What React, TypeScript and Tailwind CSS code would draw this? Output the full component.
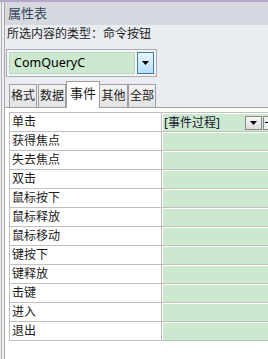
const events = [
  '单击',
  '获得焦点',
  '失去焦点',
  '双击',
  '鼠标按下',
  '鼠标释放',
  '鼠标移动',
  '键按下',
  '键释放',
  '击键',
  '进入',
  '退出',
]

function ArrowDown({ className }: { className?: string }) {
  return (
    <svg width="7" height="4" viewBox="0 0 7 4" className={className}>
      <path d="M0 0h7L3.5 4z" fill="#000" />
    </svg>
  )
}

export default function App() {
  return (
    <div className="flex h-[359px] w-[268px] flex-col overflow-hidden bg-[#e9ecf0] font-['Noto_Sans','Noto_Sans_CJK_SC',sans-serif] text-[12px] text-[#1e1e1e]">
      <div className="h-[2px] shrink-0 bg-[#b5a6cb]" />
      <div className="flex min-h-0 flex-1">
        {/* window frame */}
        <div className="w-[4px] shrink-0 bg-[#eceef1] pl-px">
          <div className="h-full w-px bg-[#b3b3b3]" />
        </div>

        <div className="flex min-w-0 flex-1 flex-col border-l border-[#a9a9a9]">
          {/* Title */}
          <div className="flex h-[23px] shrink-0 items-center bg-[#d5d9df] pl-[3px] text-[13px] text-[#34445a]">
            属性表
          </div>

          <div className="mt-px h-[16px] pl-[2px] leading-[16px] text-[12px]">
            所选内容的类型：命令按钮
          </div>

          {/* Combo */}
          <div className="mt-[7px] ml-px flex h-[28px] w-[151px] shrink-0 gap-[2px] border border-[#acacac] bg-[#f4f5f7] p-[2px]">
            <div className="flex flex-1 items-center border border-[#b9d6bc] bg-[#cce8cf] pl-[4px] text-[12.5px] leading-none text-black">
              ComQueryC
            </div>
            <div className="flex w-[17px] items-center justify-center border border-[#3c7db0] bg-gradient-to-b from-[#eaf6fd] to-[#b7def7]">
              <ArrowDown />
            </div>
          </div>

          {/* Tabs */}
          <div className="mt-[4px] ml-[4px] flex h-[26px] shrink-0 items-end">
            <div className="flex h-[23px] w-[28px] items-center justify-center border border-b-0 border-[#a0a0a0] bg-gradient-to-b from-[#f2f2f2] to-[#e3e3e3]">
              格式
            </div>
            <div className="ml-px flex h-[23px] w-[28px] items-center justify-center border border-b-0 border-[#a0a0a0] bg-gradient-to-b from-[#f2f2f2] to-[#e3e3e3]">
              数据
            </div>
            <div className="relative z-10 mb-[-1px] flex h-[27px] w-[34px] items-start justify-center border border-b-0 border-[#a0a0a0] bg-white pt-[2px] text-[13px]">
              事件
            </div>
            <div className="flex h-[23px] w-[28px] items-center justify-center border border-b-0 border-l-0 border-[#a0a0a0] bg-gradient-to-b from-[#f2f2f2] to-[#e3e3e3]">
              其他
            </div>
            <div className="flex h-[23px] w-[28px] items-center justify-center border border-b-0 border-[#a0a0a0] bg-gradient-to-b from-[#f2f2f2] to-[#e3e3e3]">
              全部
            </div>
          </div>

          {/* Panel */}
          <div className="min-h-0 flex-1 border-t border-[#a0a0a0] bg-white pt-[4px] pl-[4px]">
            <div className="border-t border-l border-[#c0c0c0]">
              {events.map((name, i) => (
                <div key={name} className="flex h-[19px] border-b border-[#c0c0c0]">
                  <div className="flex w-[151px] shrink-0 items-center pl-[2px] leading-none text-[12px] text-[#1b1b1b]">
                    {name}
                  </div>
                  <div className="flex min-w-0 flex-1 border-l border-[#bdbdbd] pt-px pl-px">
                    <div className="flex flex-1 items-center bg-[#cce8cf]">
                      {i === 0 && (
                        <>
                          <span className="pl-[1px] leading-none text-[12px] text-[#151530]">[事件过程]</span>
                          <div className="ml-auto flex h-[14px] w-[17px] shrink-0 items-center justify-center border border-[#8a8a8a] bg-gradient-to-b from-[#f8f8f8] to-[#dcdcdc]">
                            <ArrowDown />
                          </div>
                          <div className="ml-px flex h-[14px] w-[5px] shrink-0 items-center border border-r-0 border-[#8a8a8a] bg-[#f0f0f0] pl-[1px]">
                            <div className="h-px w-[3px] bg-black" />
                          </div>
                        </>
                      )}
                    </div>
                  </div>
                </div>
              ))}
            </div>
          </div>
        </div>
      </div>
    </div>
  )
}
